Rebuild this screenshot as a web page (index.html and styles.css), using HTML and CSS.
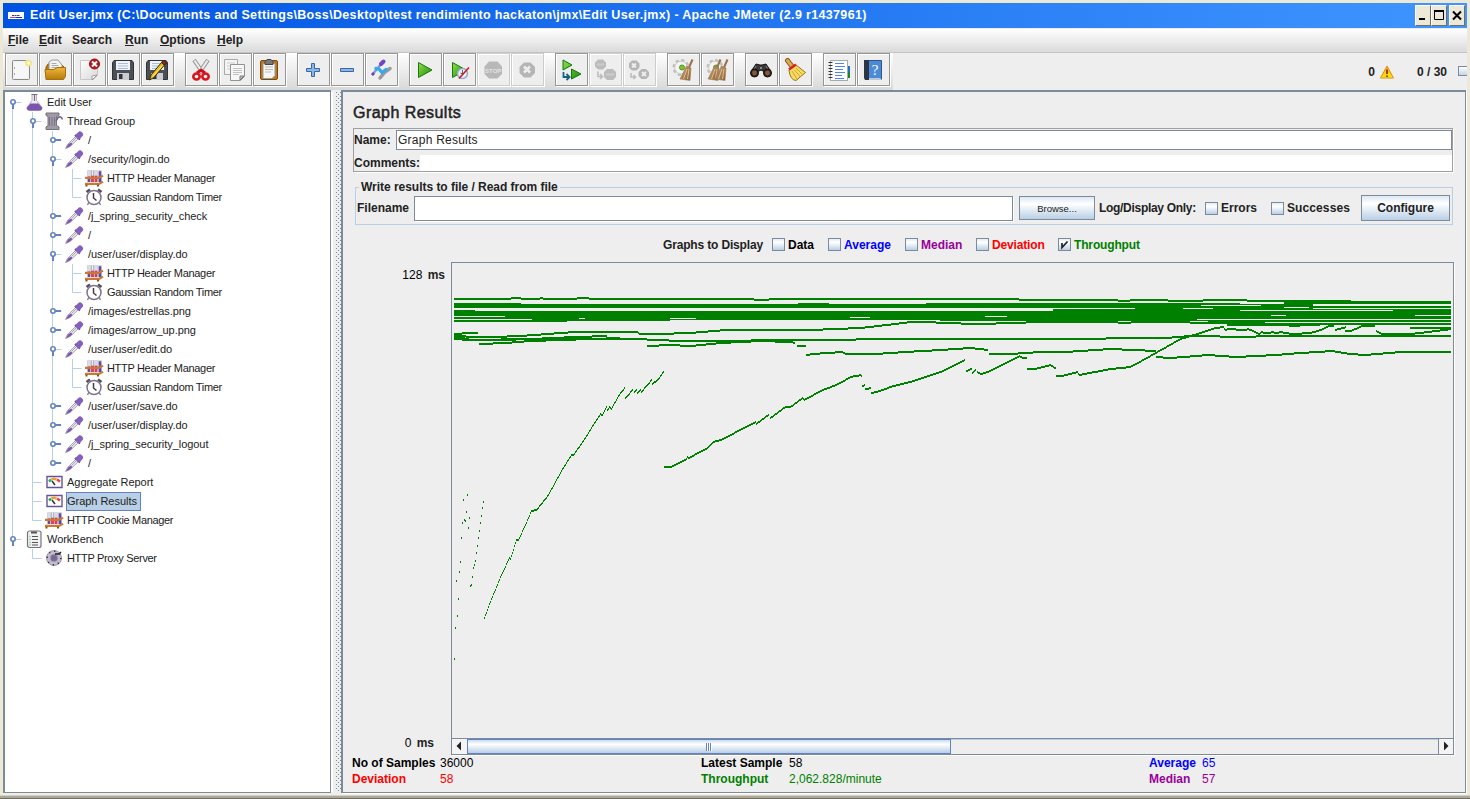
FILE: index.html
```html
<!DOCTYPE html>
<html lang="en">
<head>
<meta charset="utf-8">
<title>Edit User.jmx - Apache JMeter</title>
<link rel="stylesheet" href="styles.css">
</head>
<body>
<svg class="defs" width="0" height="0">
  <defs>
    <pattern id="bumps" width="4" height="4" patternUnits="userSpaceOnUse"><path d="M0 0h1v1H0zM2 2h1v1H2z" fill="#7b8b9b"/></pattern>
    <linearGradient id="gold" x1="0" y1="0" x2="0" y2="1"><stop offset="0" stop-color="#f0b63a"/><stop offset="1" stop-color="#b67a0c"/></linearGradient>
    <linearGradient id="green" x1="0" y1="0" x2="1" y2="1"><stop offset="0" stop-color="#8ee04a"/><stop offset="1" stop-color="#1c8a08"/></linearGradient>
    <linearGradient id="paper" x1="0" y1="0" x2="1" y2="1"><stop offset="0" stop-color="#fff"/><stop offset="1" stop-color="#d8d8d8"/></linearGradient>
    <linearGradient id="straw" x1="0" y1="0" x2="1" y2="1"><stop offset="0" stop-color="#c9a070"/><stop offset="1" stop-color="#8a6238"/></linearGradient>
    <linearGradient id="warn" x1="0" y1="0" x2="0" y2="1"><stop offset="0" stop-color="#f6a81c"/><stop offset="1" stop-color="#ffee00"/></linearGradient>

    <symbol id="i-new" viewBox="0 0 24 24"><rect x="3.500" y="2.500" width="17" height="19" rx="1" fill="#f2f2f2" stroke="#8b8b84"/><path d="M5 4h14v16H5z" fill="#fff" opacity=".4"/><path d="M5.500 9v2M5.500 15v2" stroke="#aaa"/><circle cx="19.500" cy="5" r="3.500" fill="#f1e88c"/><circle cx="19.500" cy="5" r="1.500" fill="#fffde0"/></symbol>
    <symbol id="i-open" viewBox="0 0 24 24"><path d="M3 9l2-3h13l3 3v7H3z" fill="#b37a10" stroke="#8f5e05"/><path d="M6 12V4l3-2h6l4 5v5z" fill="#f3f3f3" stroke="#999"/><path d="M8.500 5.500h5M8.500 7.500h7M8.500 9.500h7" stroke="#aaa"/><path d="M2 11.500h9l3-2h8.500v9l-2 3H3z" fill="url(#gold)" stroke="#a66f0a"/></symbol>
    <symbol id="i-close" viewBox="0 0 24 24"><path d="M3.500 2.500h17v15l-4 4h-13z" fill="url(#paper)" stroke="#c8c8c8"/><path d="M20 17l-5 5v-4z" fill="#fff" stroke="#888" stroke-width=".8"/><circle cx="17.500" cy="6" r="5" fill="#b31a1a" stroke="#8e0b0b"/><path d="M15 3.500l5 5M20 3.500l-5 5" stroke="#fff" stroke-width="2"/></symbol>
    <symbol id="i-save" viewBox="0 0 24 24"><path d="M3 2.500h18l1.500 2v17h-21v-17z" fill="#4c5055" stroke="#303236"/><path d="M5 3h14v9H5z" fill="#eef4fb"/><path d="M7 5.500h10M7 8h10M7 10.500h10" stroke="#a9bdd3"/><path d="M6 15h12v7H6z" fill="#c9ccd0"/><path d="M8 16h3.500v5H8z" fill="#303338"/></symbol>
    <symbol id="i-saveas" viewBox="0 0 24 24"><use href="#i-save"/><path d="M16.500 4.500l3 2.500L9 19.500 4.500 22l1.500-5z" fill="#e9b91e" stroke="#3c2d08"/><path d="M17 8L7.500 18.500" stroke="#fff193"/><path d="M16.500 4.500l3 2.500 2-2-3-3z" fill="#8a2f18" stroke="#38170e"/></symbol>
    <symbol id="i-cut" viewBox="0 0 24 24"><path d="M5 2l9 13M19 2l-9 13" stroke="#9b9b9b" stroke-width="4"/><path d="M5.500 2.500l8 12M18.500 2.500l-8 12" stroke="#efefef" stroke-width="2"/><path d="M8 15l4-3 4 3" fill="none" stroke="#d01018" stroke-width="3"/><ellipse cx="7.500" cy="18.500" rx="3.200" ry="3" fill="#eee" stroke="#d9161f" stroke-width="2.600"/><ellipse cx="16.500" cy="18.500" rx="3.200" ry="3" fill="#eee" stroke="#d9161f" stroke-width="2.600"/></symbol>
    <symbol id="i-copy" viewBox="0 0 24 24"><path d="M1.500 1.500h13v15h-13z" fill="#f4f4f4" stroke="#a9a9a9"/><path d="M4 5h8M4 8h4M4 11h3" stroke="#ccc"/><path d="M7.500 6.500h14v12l-4 4h-10z" fill="#f7f7f7" stroke="#929292"/><path d="M10 10.500h9M10 12.500h9M10 14.500h9M10 16.500h6" stroke="#c2c2c2"/><path d="M21 18l-4 4v-4z" fill="#ccc" stroke="#777"/></symbol>
    <symbol id="i-paste" viewBox="0 0 24 24"><rect x="3.500" y="2.500" width="17" height="19" rx="1.500" fill="#b9781d" stroke="#7b4a07"/><path d="M6 5.500h12v12l-3 3H6z" fill="#f6f6f6" stroke="#999"/><path d="M8 9h8M8 11.500h8M8 14h6" stroke="#bbb"/><path d="M8 3.500l2-2h4l2 2v3H8z" fill="#777" stroke="#444"/></symbol>
    <symbol id="i-plus" viewBox="0 0 24 24"><path d="M10.500 5.500h3v5h5v3h-5v5h-3v-5h-5v-3h5z" fill="#8db6e2" stroke="#3868a8"/></symbol>
    <symbol id="i-minus" viewBox="0 0 24 24"><path d="M5.500 10.500h13v3h-13z" fill="#8db6e2" stroke="#3868a8"/></symbol>
    <symbol id="i-toggle" viewBox="0 0 24 24"><path d="M3 17L13 5" stroke="#8a9ac8" stroke-width="2.500"/><path d="M12 6l2.500-2.500" stroke="#7145c4" stroke-width="4" stroke-linecap="round"/><path d="M11 20l5-6 5-3.500" fill="none" stroke="#9a9a9a" stroke-width="3.500" stroke-linecap="round"/><path d="M7 10.500l3 .5 3 3.500 4-3" fill="none" stroke="#3aa9ee" stroke-width="3.400" stroke-linecap="round"/><path d="M3 17l2-2" stroke="#6940bb" stroke-width="2.500"/></symbol>
    <symbol id="i-play" viewBox="0 0 24 24"><path d="M5.500 4.500v15l13.500-7.500z" fill="url(#green)" stroke="#167a0c" stroke-linejoin="round"/></symbol>
    <symbol id="i-playnow" viewBox="0 0 24 24"><use href="#i-play"/><circle cx="15.500" cy="15.500" r="5" fill="#e9eff8" stroke="#91a9ca" stroke-width="1.500"/><path d="M15.500 12v4l-2-1" fill="none" stroke="#567"/><path d="M22 9.500L12 20.500" stroke="#d71520" stroke-width="1.600"/></symbol>
    <symbol id="i-stop" viewBox="0 0 24 24"><path d="M8 3.500h8.500l4.500 5v7.500l-4.500 4.500H8L3.500 16V8.500z" fill="#b8b8b8"/><text x="12.200" y="14.500" text-anchor="middle" class="stop-text">STOP</text></symbol>
    <symbol id="i-shut" viewBox="0 0 24 24"><path d="M9 4.500h6.500l4.500 4.500v6l-4.500 4.500H9L4.500 15V9z" fill="#b5b5b5"/><path d="M9 8.500l6 6M15 8.500l-6 6" stroke="#eee" stroke-width="2.600"/></symbol>
    <symbol id="i-remote" viewBox="0 0 24 24"><path d="M4 2v10l9-5zM12.500 11v10l9.500-5z" fill="url(#green)" stroke="#137512"/><path d="M4.500 14v5h5M7.500 16l3 3-3 3" fill="none" stroke="#17647f" stroke-width="1.800"/></symbol>
    <symbol id="i-rstop" viewBox="0 0 24 24"><path d="M5 1.500h5l3 3v4l-3 3H5l-3-3v-4zM14 11h6l3 3v5l-3 3h-6l-3-3v-5z" fill="#bcbcbc"/><path d="M4 6.500h7M13 16.500h8" stroke="#ccc" stroke-width="2"/><path d="M5 13.500v5h4M7 16l2.500 2.500L7 21" fill="none" stroke="#bbb" stroke-width="1.500"/></symbol>
    <symbol id="i-rshut" viewBox="0 0 24 24"><path d="M5 2.500h4.500l3 3v4l-3 3H5l-3-3v-4zM14.500 11h4.500l3 3v4l-3 3h-4.500l-3-3v-4z" fill="#b5b5b5"/><path d="M5 5.500l4 4M9 5.500l-4 4M15 14l4 4M19 14l-4 4" stroke="#eee" stroke-width="1.800"/><path d="M4 15v4h4M6.500 17l2 2-2 2" fill="none" stroke="#bbb" stroke-width="1.500"/></symbol>
    <symbol id="broom" viewBox="0 0 24 24"><path d="M21.500 1.500l-3.500 8" stroke="#98724c" stroke-width="2"/><path d="M15.500 8l4.500 2-1 12.500-10-1.500z" fill="url(#straw)" stroke="#a07c53" stroke-width=".6"/><path d="M16 11l-3.500 10M18 11l-1.500 10" stroke="#dfbd93"/></symbol>
    <symbol id="gear" viewBox="0 0 24 24"><circle cx="10" cy="9.500" r="7.200" fill="none" stroke="#bdbdbd" stroke-width="2.600" stroke-dasharray="3.200 2.450"/><circle cx="10" cy="9.500" r="6.300" fill="#f4f4f4" stroke="#c9c9c9"/><circle cx="11" cy="9.500" r="2.500" fill="#74c82d" stroke="#5a9325"/></symbol>
    <symbol id="i-clear" viewBox="0 0 24 24"><use href="#gear"/><use href="#broom"/></symbol>
    <symbol id="i-clearall" viewBox="0 0 24 24"><use href="#gear"/><use href="#broom" x="-6"/><use href="#broom" x="1"/></symbol>
    <symbol id="i-find" viewBox="0 0 24 24"><path d="M3 12l4-6 4 1h2l4-1 4 6-1 4-8-4-8 4z" fill="#3a3a3a" stroke="#151515"/><path d="M7 8l-3 5M17 8l3 5" stroke="#888"/><circle cx="5.500" cy="15" r="4" fill="#272727" stroke="#111"/><circle cx="18.500" cy="15" r="4" fill="#272727" stroke="#111"/><circle cx="5.500" cy="15" r="2.400" fill="#8c5635"/><circle cx="18.500" cy="15" r="2.400" fill="#8c5635"/><circle cx="12" cy="10" r="1" fill="#aaa"/></symbol>
    <symbol id="i-sweep" viewBox="0 0 24 24"><path d="M4.500 2.500l5 6.500" stroke="#8a5618" stroke-width="5" stroke-linecap="round"/><path d="M4.500 2.500l5 6.500" stroke="#dba853" stroke-width="3" stroke-linecap="round"/><path d="M6 12L13 7l9.500 7.500L13 22.500Q7 22 6 12z" fill="#f6dc63" stroke="#9b7312"/><path d="M9 13l5 8M11.500 12l6 7M13 10l6 6" stroke="#d2a42c"/><path d="M6 11.500l7-5" stroke="#d52420" stroke-width="2.600"/></symbol>
    <symbol id="i-list" viewBox="0 0 24 24"><path d="M20 8h3v6h-3z" fill="#236fc5"/><path d="M20 14h3v6h-3z" fill="#17852b"/><rect x="3.500" y="2.500" width="17" height="20" fill="#fff" stroke="#aaa"/><path d="M8 5.500h9M8 8.500h10M8 11.500h8M8 14.500h10M8 17.500h7M8 20.500h9" stroke="#4a86ed"/><path d="M1.500 4.500h4M1.500 7.500h4M1.500 10.500h4M1.500 13.500h4M1.500 16.500h4M1.500 19.500h4" stroke="#333"/></symbol>
    <symbol id="i-help" viewBox="0 0 24 24"><path d="M4.500 2.500h16v19h-16z" fill="#4c8ad8" stroke="#2b568e"/><path d="M3 2h5v20H4l-1-2z" fill="#2b3544"/><path d="M8 20h11l2 2H8z" fill="#b9c8da"/><text x="14" y="16.500" text-anchor="middle" class="help-text">?</text></symbol>

    <symbol id="t-flask" viewBox="0 0 20 20"><path d="M8 2.500v6L3 15.500q-.5 3 2.500 3h10q3 0 2.500-3L12.500 8.500v-6" fill="#f0edf5" stroke="#b5aec2"/><path d="M6.500 11.500h8l3.500 4q.5 3-2.500 3h-10q-3 0-2.500-3z" fill="#7a55b0"/><path d="M7.500 2.500h6M10.500 3v6" stroke="#77717f" stroke-width="1.200"/></symbol>
    <symbol id="t-spool" viewBox="0 0 20 20"><path d="M2 2h13v2.500l-2.500 1v9l2.500 1.500v2.500H2V16l2-1.500v-9L2 4.500z" fill="#a09aa6" stroke="#77717e"/><path d="M5.500 6v9M8 6v9M10.500 6v9" stroke="#7a7484"/><path d="M12 10l2-3.500q3-2 4.500 2" fill="none" stroke="#77658f" stroke-width="1.600"/></symbol>
    <symbol id="t-pipette" viewBox="0 0 20 20"><path d="M1.500 18.500l2-4L12 6l2.500 2.500-8.500 8z" fill="#e9e5f0" stroke="#aaa4b3"/><path d="M2 18.500l2-4 3-2 1.500 1.500-2 2z" fill="#7b53b5"/><path d="M11 5l5 4.500" stroke="#584286" stroke-width="2"/><path d="M14.500 6l1.500-1.500" stroke="#8460bd" stroke-width="6" stroke-linecap="round"/><path d="M12.500 7.500l-5 5" stroke="#aaa"/></symbol>
    <symbol id="t-tubes" viewBox="0 0 20 20"><g transform="translate(0 .5) scale(1 .9)"><path d="M5 2v13M8.500 2v13M12 2v13M16 2v13" stroke="#a5a5b2" stroke-width="3"/><path d="M5 2v8M8.500 2v6M12 2v6M16 2v6" stroke="#eeeef8" stroke-width="1.500"/><path d="M5 9v6M16 3v5" stroke="#6648a3" stroke-width="2.400"/><path d="M8.500 8v7M12 8v7" stroke="#e7325c" stroke-width="2.600"/><path d="M16 8v7" stroke="#4746c4" stroke-width="2.600"/><path d="M1 10.500h14l4-2.500M1 17h14l4-2.500" fill="none" stroke="#c87932" stroke-width="2.400"/><path d="M2.500 18v2M14 18v2" stroke="#8f4b12" stroke-width="2"/></g></symbol>
    <symbol id="t-clock" viewBox="0 0 20 20"><path d="M2.500 5L6 2.500M14 2.500L17.500 5" stroke="#55505f" stroke-width="2.600"/><path d="M5 15l-1.500 3M15 15l1.500 3" stroke="#8a8492" stroke-width="1.500"/><circle cx="10" cy="10.500" r="7" fill="#fff" stroke="#7d748a" stroke-width="1.500"/><path d="M9.500 6v5l3 2.500" fill="none" stroke="#433d4b" stroke-width="1.500"/></symbol>
    <symbol id="t-graph" viewBox="0 0 20 20"><path d="M3 4.500h15v11H3z" fill="#fff" stroke="#68519b" stroke-width="1.400"/><path d="M5 9.500l2-2" stroke="#31a66b" stroke-width="2.500"/><path d="M7.500 7.500q2.500-1.500 5 0" stroke="#f39a39" stroke-width="2.500" fill="none"/><path d="M13 7.500l3 2" stroke="#e74336" stroke-width="2.500"/><path d="M8 9l3 4" stroke="#333" stroke-width="1.500"/></symbol>
    <symbol id="t-bench" viewBox="0 0 20 20"><rect x="3.500" y="2" width="13.500" height="16.500" rx="2" fill="#f2f2f2" stroke="#77727d" stroke-width="1.200"/><path d="M7 2.500h6v2H7z" fill="#555"/><path d="M8 7.500h6M8 10.500h6M8 13.500h6M8 16h6" stroke="#555" stroke-width="1.200"/><path d="M5.500 7.500h1M5.500 10.500h1M5.500 13.500h1M5.500 16h1" stroke="#58c05a" stroke-width="1.500"/></symbol>
    <symbol id="t-proxy" viewBox="0 0 20 20"><circle cx="10" cy="10" r="7.500" fill="#c4bdd0" stroke="#9c94a8"/><circle cx="10" cy="10" r="6.800" fill="none" stroke="#27232d" stroke-width="1.400" stroke-dasharray="1.200 4.140"/><circle cx="10" cy="10" r="3.800" fill="#78698f" stroke="#a79bb8"/><path d="M11 6h4l2-2" stroke="#222" fill="none" stroke-width="1.500"/></symbol>
  </defs>
</svg>

<div class="window">
  <header class="titlebar">
    <svg class="app-icon" width="16" height="7"><path d="M0 0h16v7H0z" fill="#fff"/><path d="M2 5.500h7" stroke="#d33a9b"/><path d="M8 5.500h6" stroke="#2222c8"/><path d="M4 3.500h8" stroke="#444" stroke-dasharray="2 .5"/></svg>
    <h1 class="caption">Edit User.jmx (C:\Documents and Settings\Boss\Desktop\test rendimiento hackaton\jmx\Edit User.jmx) - Apache JMeter (2.9 r1437961)</h1>
    <div class="win-buttons">
      <span class="win-btn"><svg width="14" height="18"><path d="M3 13h6" stroke="#000" stroke-width="2"/></svg></span>
      <span class="win-btn"><svg width="14" height="18"><path d="M2 5h10" stroke="#000" stroke-width="2"/><path d="M2.500 5v8.500h9V5" fill="none" stroke="#000"/></svg></span>
      <span class="win-btn win-close"><svg width="14" height="18"><path d="M3 5.500l8 8M11 5.500l-8 8" stroke="#000" stroke-width="2"/></svg></span>
    </div>
  </header>

  <nav class="menubar">
    <span class="m-file"><u>F</u>ile</span><span class="m-edit"><u>E</u>dit</span><span class="m-search">Search</span><span class="m-run"><u>R</u>un</span><span class="m-options"><u>O</u>ptions</span><span class="m-help"><u>H</u>elp</span>
  </nav>

  <div class="toolrow">
    <div class="toolbar" id="toolbar"></div>
    <div class="status">
      <b class="s-errors">0</b>
      <svg class="s-warn" width="14" height="14" viewBox="0 0 14 14"><path d="M7 1L13.500 13H.5z" fill="url(#warn)" stroke="#dc8d12" stroke-linejoin="round"/><path d="M7 4.500v4.500M7 10.500v1.500" stroke="#9c4210" stroke-width="2"/></svg>
      <b class="s-threads">0 / 30</b>
      <span class="s-box"></span>
    </div>
  </div>

  <main class="split">
    <section class="tree" id="tree"></section>
    <div class="divider"><svg width="5" height="700"><path d="M0 0h5v700H0z" fill="url(#bumps)"/></svg></div>
    <section class="panel">
      <h2 class="heading">Graph Results</h2>
      <div class="ident">
        <div class="ident-name"><label>Name:</label><div class="name-input">Graph Results</div></div>
        <div class="ident-comments"><label>Comments:</label><div class="comment-input"></div></div>
      </div>
      <fieldset class="file-box">
        <legend>Write results to file / Read from file</legend>
        <div class="file-row">
          <label class="filename">Filename</label>
          <div class="file-input"></div>
          <span class="metal-btn browse">Browse...</span>
          <label class="only">Log/Display Only:</label>
          <span class="check"></span><label class="errors">Errors</label>
          <span class="check"></span><label class="successes">Successes</label>
          <span class="metal-btn configure">Configure</span>
        </div>
      </fieldset>
      <div class="series-row">
        <label class="g-label">Graphs to Display</label>
        <span class="check"></span><label class="g-data">Data</label>
        <span class="check"></span><label class="g-average">Average</label>
        <span class="check"></span><label class="g-median">Median</label>
        <span class="check"></span><label class="g-deviation">Deviation</label>
        <span class="check"><svg width="11" height="11"><path d="M3 4v4.500L8.500 2.500" fill="none" stroke="#222" stroke-width="1.700"/></svg></span><label class="g-throughput">Throughput</label>
      </div>
      <div class="graph-row">
        <div class="axis"><span class="axis-top">128 <b>ms</b></span><span class="axis-bottom">0 <b>ms</b></span></div>
        <div class="graph">
          <svg id="plot" width="1001" height="475" viewBox="452 263 1001 475" shape-rendering="crispEdges"></svg>
          <div class="scrollbar">
            <span class="arrow"><svg width="14" height="14"><path d="M9 2.500v9L4.500 7z" fill="#222"/></svg></span>
            <span class="thumb"><i class="grip"></i></span>
            <span class="track"></span>
            <span class="arrow arrow-right"><svg width="14" height="14"><path d="M5 2.500v9L9.500 7z" fill="#222"/></svg></span>
          </div>
        </div>
      </div>
      <div class="stats">
        <b>No of Samples</b><span>36000</span><b>Latest Sample</b><span>58</span><b class="blue">Average</b><span class="blue">65</span>
        <b class="red">Deviation</b><span class="red">58</span><b class="green">Throughput</b><span class="green">2,062.828/minute</span><b class="purple">Median</b><span class="purple">57</span>
      </div>
    </section>
  </main>
</div>
<div class="frame-bottom"></div>
<script src="app.js"></script>
</body>
</html>
```

FILE: styles.css
```css
* { box-sizing: border-box; }
body { margin: 0; font-family: "Liberation Sans", Arial, sans-serif; font-size: 12px; color: #222; background: #eee; overflow: hidden; }
.defs { position: absolute; }
h1, h2 { margin: 0; }
svg { display: block; }
.window { width: 1470px; height: 795px; display: flex; flex-direction: column; background: #eee; border: 3px solid #ece9d8; border-bottom: 0; box-shadow: inset 0 0 0 transparent; }
.frame-bottom { height: 4px; border-top: 1px solid #d8d2bd; border-bottom: 1px solid #716f64; background: #aca899; }
.titlebar { height: 25px; flex: none; display: flex; align-items: center; padding: 0 2px 0 5px; background: linear-gradient(90deg, #0053e1, #3f96ff); }
.caption { flex: 1; margin-left: 6px; font-size: 12.5px; line-height: 25px; color: #fff; white-space: nowrap; letter-spacing: .335px; }
.win-buttons { display: flex; align-self: flex-start; padding-top: 2px; }
.win-btn { width: 16px; height: 21px; background: #ece9d8; border: 1px solid #fff; border-right-color: #716f64; border-bottom-color: #716f64; }
.win-close { margin-left: 2px; }
.menubar { height: 24px; flex: none; display: flex; align-items: center; padding: 0 0 2px 5px; margin-top: 1px; background: linear-gradient(#fff, #dadada); border-bottom: 1px solid #c4c4c4; font-weight: bold; }
.m-file { width: 31px; } .m-edit { width: 33px; } .m-search { width: 53px; } .m-run { width: 35px; } .m-options { width: 57px; }
.toolrow { height: 37px; flex: none; display: flex; justify-content: space-between; }
.toolbar { display: flex; padding: 0 2px; width: 890px; background: linear-gradient(#fff, #d8d8d8); }
.tool { width: 33px; height: 33px; margin-right: 1px; border: 1px solid #969696; background: #eee; box-shadow: 1px 1px #fff, inset 1px 1px #fff; padding: 4px 0 0 3px; }
.tool-off { border-color: #ccc; }
.tool-gap { margin-left: 10px; }
.stop-text { font: bold 6px "Liberation Sans", sans-serif; fill: #e4e4e4; }
.help-text { font: 15px "Liberation Serif", serif; fill: #fff; }
.status { display: flex; align-items: center; height: 37px; }
.s-warn { margin: 0 23px 0 5px; }
.s-threads { margin-right: 11px; }
.s-box { width: 9px; height: 10px; margin-bottom: 1px; border: 1px solid #7b8b9b; border-right: 0; background: linear-gradient(#fff, #c4d5e8); }
.split { flex: 1; min-height: 0; display: flex; padding-bottom: 1px; }
.tree { width: 328px; flex: none; background: #fff; border: 2px solid #7b8b9b; border-right-width: 1px; border-bottom-width: 1px; padding-top: 1px; margin-bottom: 1px; font-size: 11px; }
.row { display: flex; height: 19px; align-items: center; white-space: nowrap; }
.row-label { display: block; height: 19px; padding: 0 3px 0 0; margin-left: 1px; border: 1px solid transparent; line-height: 17px; letter-spacing: -.03px; }
.row-icon { margin-top: -1px; }
.row-tubes .row-label, .row-clock .row-label, .row-proxy .row-label { letter-spacing: -.32px; }
.row-pipette .row-label { margin-left: 2px; margin-right: -1px; letter-spacing: -.05px; }
.row-selected { background: #b8cfe5; border-color: #6382bf; }
.row-icon { flex: none; }
.divider { width: 10px; flex: none; margin: 2px 0; padding-left: 3px; border-left: 2px solid #fff; overflow: hidden; }
.panel { flex: 1; min-width: 0; display: flex; flex-direction: column; border: 2px solid #7b8b9b; border-right-width: 1px; border-bottom-width: 1px; margin: 0 1px 1px 0; padding: 0 12px 0 9px; box-shadow: 1px 1px #fff; }
.panel label, .panel legend { font-weight: bold; white-space: nowrap; }
.heading { height: 36px; padding-left: 1px; line-height: 42px; font-size: 16px; font-weight: normal; -webkit-text-stroke: .5px #222; letter-spacing: .46px; }
.ident { height: 44px; flex: none; margin-left: 1px; border: 1px solid #a0a0a0; box-shadow: 1px 1px #fff; padding: 1px 0 0; }
.ident-name { display: flex; height: 20px; line-height: 21px; }
.ident-name label { width: 42px; }
.name-input { flex: 1; border: 1px solid #7b8b9b; background: #fff; line-height: 19px; padding-left: 1px; letter-spacing: .24px; }
.ident-comments { display: flex; height: 16px; margin-top: 5px; line-height: 17px; }
.ident-comments label { width: 66px; }
.comment-input { flex: 1; background: #fff; }
.file-box { height: 44px; flex: none; margin: 9px 0 0 3px; min-width: 0; padding: 0; border: 1px solid #b8cfe5; }
.file-box legend { height: 12px; line-height: 12px; margin-left: 3px; padding: 0 2px; letter-spacing: -.03px; }
.file-row { display: flex; align-items: center; height: 26px; margin-top: 2px; padding: 0 2px 0 1px; }
.filename { width: 57px; }
.file-input { width: 599px; height: 25px; border: 1px solid #7b8b9b; background: #fff; box-shadow: 1px 1px #fff; margin-right: 6px; }
.metal-btn { display: grid; place-items: center; border: 1px solid #7b8b9b; background: linear-gradient(#dde8f3, #fff 32%, #b8cfe5); }
.browse { width: 76px; height: 24px; font-size: 9.500px; }
.only { margin-left: 4px; width: 106px; letter-spacing: -.3px; }
.only ~ .only { margin: 0; }
.file-row .errors { width: 50px; } .file-row .successes { width: 74px; letter-spacing: .1px; }
.file-row .check { margin-right: 3px; }
.configure { flex: 1; height: 26px; font-weight: bold; }
.check { width: 13px; height: 13px; flex: none; border: 1px solid #7b8b9b; background: linear-gradient(#e5edf5, #fff 32%, #b8cfe5); }
.series-row { display: flex; align-items: center; height: 37px; padding: 2px 0 0 311px; }
.series-row .check { margin-right: 3px; }
.g-label { width: 109px; letter-spacing: -.16px; }
.g-data { width: 40px; color: #000; }
.g-average { width: 61px; color: #00f; }
.g-median { width: 55px; color: #909; }
.g-deviation { width: 66px; color: #f00; letter-spacing: -.15px; }
.g-throughput { color: #008000; letter-spacing: -.15px; }
.graph-row { display: flex; height: 493px; margin-right: -1px; flex: none; }
.axis { width: 99px; display: flex; flex-direction: column; justify-content: space-between; padding: 6px 6px 5px 0; text-align: right; color: #000; }
.axis-bottom { padding-right: 11px; }
.axis b { margin-left: 2px; color: #222; }
.graph { width: 1003px; border: 1px solid #7b8b9b; box-shadow: 1px 1px #fff; }
.scrollbar { display: flex; height: 16px; border-top: 1px solid #7b8b9b; }
.arrow { width: 15px; height: 15px; background: #f4f4f4; }
.arrow-right { border-left: 1px solid #7b8b9b; }
.thumb { width: 484px; border: 1px solid #6382bf; background: linear-gradient(#c8dcef, #fff 32%, #b8cfe5); display: grid; place-items: center; }
.grip { width: 6px; height: 8px; background: repeating-linear-gradient(90deg, #6382bf 0 1px, #fff 1px 2px); }
.track { flex: 1; border-top: 1px solid #b8cfe5; }
.stats { display: grid; grid-template-columns: 88px 261px 88px 360px 53px 60px; grid-auto-rows: 16px; line-height: 16px; color: #000; white-space: nowrap; }
.stats .blue { color: #00f; } .stats .red { color: #f00; } .stats .green { color: #008000; } .stats .purple { color: #909; }
```

FILE: app.js
```js
const SVG_NS = 'http://www.w3.org/2000/svg';

// Toolbar: groups of icon names; a leading "-" marks a disabled button.
const groups = [
  ['new', 'open', 'close', 'save', 'saveas'], ['cut', 'copy', 'paste'], ['plus', 'minus', 'toggle'],
  ['play', 'playnow', '-stop', '-shut'], ['remote', '-rstop', '-rshut'], ['clear', 'clearall'],
  ['find', 'sweep'], ['list', 'help']
];
document.getElementById('toolbar').innerHTML = groups.map((g, gi) => g.map((n, i) => {
  const off = n[0] === '-';
  const cls = 'tool' + (off ? ' tool-off' : '') + (gi && !i ? ' tool-gap' : '');
  return `<span class="${cls}"><svg width="24" height="24"><use href="#i-${n.replace('-', '')}"/></svg></span>`;
}).join('')).join('');

// Tree rows: level, icon, label, handle (1 expanded, 2 collapsed, 0 none)
const rows = [
  [0, 'flask', 'Edit User', 1], [1, 'spool', 'Thread Group', 1], [2, 'pipette', '/', 2],
  [2, 'pipette', '/security/login.do', 1], [3, 'tubes', 'HTTP Header Manager', 0], [3, 'clock', 'Gaussian Random Timer', 0],
  [2, 'pipette', '/j_spring_security_check', 2], [2, 'pipette', '/', 2],
  [2, 'pipette', '/user/user/display.do', 1], [3, 'tubes', 'HTTP Header Manager', 0], [3, 'clock', 'Gaussian Random Timer', 0],
  [2, 'pipette', '/images/estrellas.png', 2], [2, 'pipette', '/images/arrow_up.png', 2],
  [2, 'pipette', '/user/user/edit.do', 1], [3, 'tubes', 'HTTP Header Manager', 0], [3, 'clock', 'Gaussian Random Timer', 0],
  [2, 'pipette', '/user/user/save.do', 2], [2, 'pipette', '/user/user/display.do', 2],
  [2, 'pipette', '/j_spring_security_logout', 2], [2, 'pipette', '/', 2],
  [1, 'graph', 'Aggregate Report', 0], [1, 'graph', 'Graph Results', 0], [1, 'tubes', 'HTTP Cookie Manager', 0],
  [0, 'bench', 'WorkBench', 1], [1, 'proxy', 'HTTP Proxy Server', 0]
];
function continues(i, k) {
  for (let j = i + 1; j < rows.length; j++) {
    if (rows[j][0] < k) return false;
    if (rows[j][0] === k) return true;
  }
  return false;
}
document.getElementById('tree').innerHTML = rows.map(([lvl, icon, label, handle], i) => {
  const w = 19 + 20 * lvl;
  let d = '';
  for (let k = 0; k <= lvl; k++) {
    const x = 7.5 + 20 * k;
    if (continues(i, k)) d += `M${x} ${i ? 0 : 9}V19`;
    else if (k === lvl) d += `M${x} 0V9.500`;
  }
  const hx = 7.5 + 20 * lvl;
  d += `M${hx} 9.500h9`;
  let knob = '';
  if (handle) {
    knob = `<path d="M${hx + .5} 9${handle === 1 ? 'v7' : 'h8'}" stroke="#6382bf" stroke-width="2"/><circle cx="${hx + .5}" cy="9" r="2.200" fill="#fff" stroke="#6382bf" stroke-width="1.600"/>`;
  }
  const sel = label === 'Graph Results' ? ' row-selected' : '';
  return `<div class="row row-${icon}"><svg width="${w}" height="19"><path d="${d}" fill="none" stroke="#b8cfe5"/>${knob}</svg>` +
    `<svg class="row-icon" width="21" height="20"><use href="#t-${icon}" width="20" height="20"/></svg><span class="row-label${sel}">${label}</span></div>`;
}).join('');

// Throughput plot: every sample is a 1x2 pixel dot.
let dots = '';
function line(...p) {
  let run = null;
  for (let i = 0; i + 3 < p.length; i += 2) {
    const [x0, y0, x1, y1] = p.slice(i, i + 4);
    for (let x = x0; x < x1; x++) {
      const y = Math.round(y0 + (y1 - y0) * (x - x0) / (x1 - x0));
      if (run && run[1] === y) { run[2]++; continue; }
      if (run) dots += `M${run[0]} ${run[1]}h${run[2]}v2h-${run[2]}z`;
      run = [x, y, 1];
    }
  }
  if (run) dots += `M${run[0]} ${run[1]}h${run[2]}v2h-${run[2]}z`;
}
function block(x0, x1, y0, y1) { dots += `M${x0} ${y0}H${x1}V${y1}H${x0}z`; }

// start-up scatter
[658, 627, 580, 615, 598, 571, 561, 537, 522, 499, 519, 520, 511, 494, 527, 517, 585, 584, 576, 567, 564, 560, 552, 545, 537, 530, 522, 515, 507, 501]
  .forEach((y, i) => line(454 + i, y, 455 + i, y));
line(484, 617, 491, 598, 494, 591, 501, 574, 509, 557, 510, 558, 516, 539, 518, 539, 525, 524, 531, 510, 536, 509, 540, 504, 548, 494, 561, 470, 571, 454, 573, 454, 583, 440, 596, 419, 600, 413, 602, 414, 607, 404);
line(607, 409, 609, 406, 611, 408, 618, 395, 625, 386);
line(625, 397, 633, 388); line(634, 391, 637, 388); line(637, 392, 640, 389, 641, 391, 652, 378);
line(652, 383, 658, 378, 664, 369);
line(664, 466, 670, 466, 685, 459, 687, 456, 689, 457, 697, 452, 707, 447, 713, 441, 723, 438, 745, 426, 755, 421, 756, 423, 769, 413);
line(770, 417, 785, 406, 790, 406, 802, 397, 804, 399, 820, 390, 838, 383, 850, 376, 861, 374);
line(861, 375, 862, 375); line(862, 385, 865, 384); line(865, 388, 871, 387);
line(871, 392, 876, 391, 882, 389, 893, 385, 910, 381, 925, 376, 940, 371, 965, 359);
line(966, 370, 972, 367); line(972, 372, 976, 368); line(977, 371, 981, 373, 990, 370, 1019, 355, 1022, 357, 1027, 357);
line(1027, 368, 1035, 368, 1050, 364, 1056, 368);
line(1056, 375, 1062, 375, 1077, 371, 1079, 374, 1110, 368, 1130, 366, 1150, 355, 1180, 338, 1200, 332, 1215, 327, 1224, 326);
line(1224, 328, 1225, 329, 1227, 328, 1245, 329, 1247, 328, 1253, 330, 1259, 333, 1261, 331, 1264, 332, 1268, 332, 1272, 331, 1276, 332, 1280, 331, 1292, 333, 1310, 332, 1320, 329, 1328, 325, 1334, 325);
line(1335, 329, 1346, 326); line(1345, 330, 1350, 330, 1362, 325, 1375, 325);
line(1376, 330, 1382, 333, 1410, 333, 1428, 331, 1451, 328);

// top line
line(454, 298, 511, 298); line(511, 297, 521, 297); line(521, 298, 540, 298); line(540, 297, 543, 297);
line(543, 298, 577, 298); line(577, 297, 589, 297); line(589, 298, 754, 298); line(754, 299, 769, 299);
line(769, 298, 1018, 298, 1019, 299, 1117, 299, 1118, 300, 1141, 299, 1195, 300, 1210, 299, 1284, 300);
block(1284, 1351, 300, 304); block(1351, 1451, 301, 304);

// dense bands
block(454, 521, 303, 308); block(521, 1045, 304, 308); block(798, 829, 303, 308); block(926, 1240, 303, 308);
block(1045, 1134, 304, 309); block(1134, 1313, 306, 310); block(1240, 1313, 304, 306); block(1313, 1451, 306, 308);
block(454, 475, 310, 316); block(475, 1451, 311, 316); block(454, 505, 317, 319); block(505, 1451, 315, 319);
block(454, 567, 320, 322); block(532, 670, 317, 321); block(670, 940, 318, 320); block(1053, 1451, 309, 313);
block(940, 1210, 319, 321); line(930, 321, 942, 322, 980, 323, 1040, 321, 1115, 321, 1120, 322, 1140, 321, 1240, 322, 1290, 323, 1451, 323);
block(1208, 1451, 320, 322); line(1227, 324, 1288, 324, 1289, 325, 1330, 323, 1410, 323); block(1410, 1451, 327, 329);

// middle and lower lines
line(454, 333, 468, 332, 478, 332);
line(454, 335, 477, 336, 492, 336, 520, 335, 560, 332, 574, 331, 637, 331, 639, 333, 657, 333, 690, 332, 725, 329, 810, 329, 860, 327, 895, 323, 910, 321, 935, 321);
line(454, 337, 463, 337, 470, 339, 500, 339, 530, 338, 575, 336, 607, 335);
line(454, 338, 470, 339, 530, 338, 645, 338, 648, 339, 690, 340, 720, 340, 781, 339, 930, 338, 1045, 338, 1165, 337, 1190, 335, 1250, 336, 1260, 335, 1343, 335, 1395, 335, 1451, 335);
line(479, 343, 505, 342, 530, 340, 560, 339, 620, 337);
line(647, 345, 670, 344, 690, 345, 720, 342, 760, 340, 790, 341, 795, 342); line(797, 345, 806, 345);
line(806, 354, 812, 353, 842, 351, 845, 353, 875, 353, 905, 351, 940, 349, 970, 347, 988, 349);
line(989, 353, 1010, 353, 1040, 351, 1065, 351, 1110, 348, 1156, 350);
line(1156, 356, 1170, 357, 1208, 354, 1235, 356, 1275, 354, 1300, 352, 1332, 350, 1350, 353, 1365, 354, 1400, 351, 1451, 351);

// background gaps inside the dense bands
const gaps = 'M458 316h6v1h-6zM469 316h5v1h-5zM478 316h4v1h-4zM505 319h27v1h-27zM579 318h6v1h-6zM670 318h26v1h-26zM850 317h20v1h-20zM985 316h22v1h-22zM1045 308h90v1h-90zM1183 308h30v1h-30zM1201 305h60v1h-60zM1284 307h25v1h-25zM1240 310h153v1h-153zM1197 319h80v1h-80zM1271 315h15v1h-15zM1254 319h100v1h-100zM1415 315h36v1h-36zM1393 308h58v1h-58z';
const plot = document.getElementById('plot');
[[dots, '#008000'], [gaps, '#eee']].forEach(([d, fill]) => {
  const path = document.createElementNS(SVG_NS, 'path');
  path.setAttribute('d', d);
  path.setAttribute('fill', fill);
  plot.appendChild(path);
});
```
